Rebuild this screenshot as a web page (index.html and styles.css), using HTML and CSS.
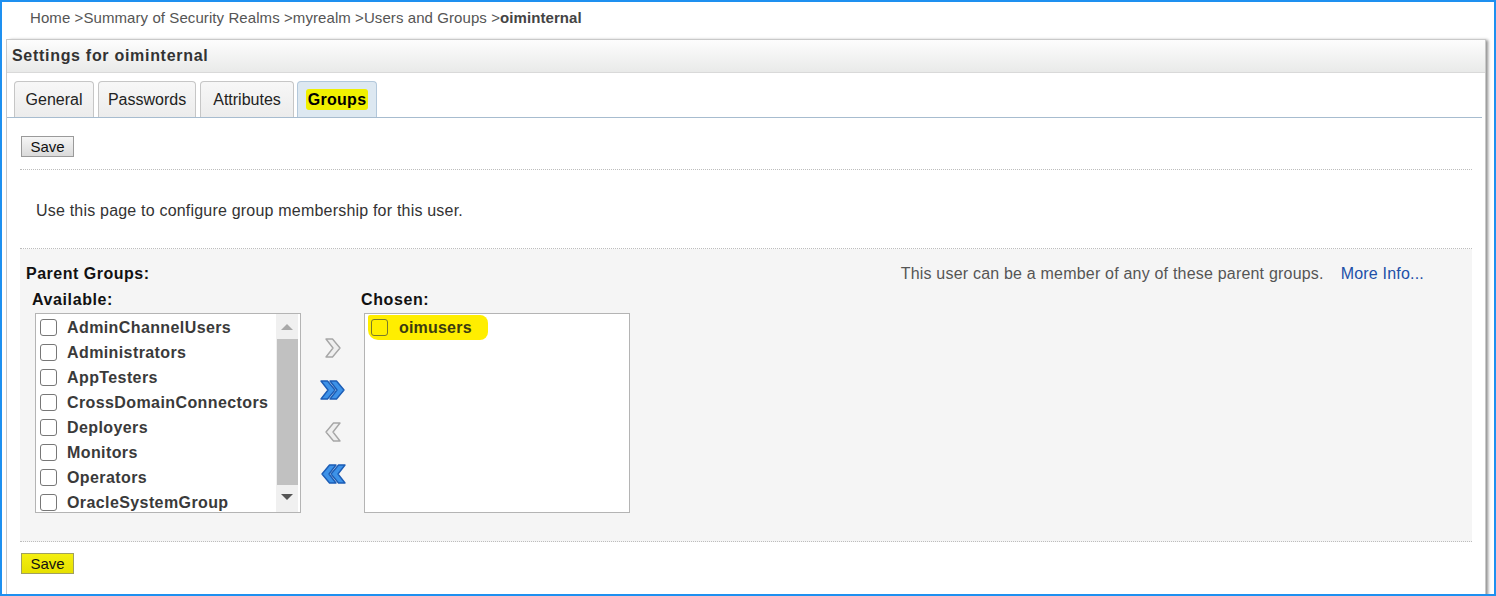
FILE: index.html
```html
<!DOCTYPE html>
<html>
<head>
<meta charset="utf-8">
<link rel="stylesheet" href="styles.css">
</head>
<body>
<div class="frame">
  <div class="crumbs">Home &gt;Summary of Security Realms &gt;myrealm &gt;Users and Groups &gt;<b>oiminternal</b></div>
  <div class="panel">
    <div class="panel-head">Settings for oiminternal</div>
    <div class="tabs">
      <div class="tab t-general">General</div>
      <div class="tab t-passwords">Passwords</div>
      <div class="tab t-attributes">Attributes</div>
      <div class="tab t-groups active"><span class="hl">Groups</span></div>
    </div>
    <div class="content">
      <button class="btn">Save</button>
      <div class="intro">Use this page to configure group membership for this user.</div>
      <div class="groups">
        <div class="grow">
          <div class="glabel">Parent Groups:</div>
          <div class="ginfo">This user can be a member of any of these parent groups.<a class="more">More Info...</a></div>
        </div>
        <div class="shuttle">
          <div class="col">
            <div class="clabel">Available:</div>
            <div class="box">
              <div class="items">
                <div class="item"><span class="cb"></span>AdminChannelUsers</div>
                <div class="item"><span class="cb"></span>Administrators</div>
                <div class="item"><span class="cb"></span>AppTesters</div>
                <div class="item"><span class="cb"></span>CrossDomainConnectors</div>
                <div class="item"><span class="cb"></span>Deployers</div>
                <div class="item"><span class="cb"></span>Monitors</div>
                <div class="item"><span class="cb"></span>Operators</div>
                <div class="item"><span class="cb"></span>OracleSystemGroup</div>
              </div>
              <div class="sbar">
                <div class="sarrow up"></div>
                <div class="thumb"></div>
                <div class="sarrow down"></div>
              </div>
            </div>
          </div>
          <div class="arrows">
            <svg width="26" height="22" viewBox="0 0 26 22"><polygon points="6,2 12.5,2 20,11 12.5,20 6,20 13,11" fill="#efefef" stroke="#a6a6a6" stroke-width="1.4" stroke-linejoin="round"/></svg>
            <svg width="26" height="22" viewBox="0 0 26 22"><polygon points="1,2 7.5,2 15,11 7.5,20 1,20 8,11" fill="#3d92e8" stroke="#1b5cb5" stroke-width="1.4" stroke-linejoin="round"/><polygon points="10,2 16.5,2 24,11 16.5,20 10,20 17,11" fill="#3d92e8" stroke="#1b5cb5" stroke-width="1.4" stroke-linejoin="round"/></svg>
            <svg width="26" height="22" viewBox="0 0 26 22"><polygon points="20,2 13.5,2 6,11 13.5,20 20,20 13,11" fill="#efefef" stroke="#a6a6a6" stroke-width="1.4" stroke-linejoin="round"/></svg>
            <svg width="26" height="22" viewBox="0 0 26 22"><polygon points="16,2 9.5,2 2,11 9.5,20 16,20 9,11" fill="#3d92e8" stroke="#1b5cb5" stroke-width="1.4" stroke-linejoin="round"/><polygon points="25,2 18.5,2 11,11 18.5,20 25,20 18,11" fill="#3d92e8" stroke="#1b5cb5" stroke-width="1.4" stroke-linejoin="round"/></svg>
          </div>
          <div class="col">
            <div class="clabel">Chosen:</div>
            <div class="box chosen">
              <div class="items">
                <div class="item picked"><span class="cb"></span>oimusers</div>
              </div>
            </div>
          </div>
        </div>
      </div>
      <button class="btn yellow">Save</button>
    </div>
  </div>
</div>
</body>
</html>
```

FILE: styles.css
```css
html, body {
  margin: 0;
  padding: 0;
  background: #ffffff;
}
body {
  font-family: "Liberation Sans", Arial, sans-serif;
  color: #333333;
}
.frame {
  width: 1496px;
  height: 596px;
  box-sizing: border-box;
  border: 2px solid #1e90f0;
  overflow: hidden;
  background: #ffffff;
}
.crumbs {
  padding: 6px 0 0 28px;
  height: 20px;
  line-height: 20px;
  font-size: 15px;
  letter-spacing: 0.08px;
  color: #555555;
}
.crumbs b {
  color: #444444;
}
.panel {
  margin: 11px 8px 0 4px;
  border: 1px solid #c9c9c9;
  border-bottom: none;
  box-shadow: 3px 0 3px -1px #8c8c8c;
  height: 600px;
  background: #ffffff;
}
.panel-head {
  height: 32px;
  line-height: 32px;
  padding-left: 5px;
  font-size: 16px;
  letter-spacing: 0.7px;
  font-weight: bold;
  color: #333333;
  background: linear-gradient(#fdfdfd, #e9eae9);
  border-bottom: 1px solid #d9d9d9;
}
.tabs {
  display: flex;
  gap: 4px;
  padding: 8px 0 0 7px;
  border-bottom: 1px solid #a7bccf;
  margin-right: 3px;
}
.tab {
  height: 35px;
  line-height: 35px;
  text-align: center;
  font-size: 16px;
  color: #222222;
  border: 1px solid #c6c6c6;
  border-bottom: none;
  border-radius: 4px 4px 0 0;
  background: linear-gradient(#f7f7f7, #ececec);
}
.t-general { width: 78px; }
.t-passwords { width: 96px; }
.t-attributes { width: 92px; }
.t-groups { width: 78px; margin-left: -1px; }
.tab.active {
  background: #dde8f1;
  border-color: #b3c8db;
  font-weight: bold;
  color: #000000;
}
.hl {
  background: #f0f000;
  padding: 2px 2px;
  border-radius: 3px;
  letter-spacing: 0.3px;
}
.content {
  padding: 18px 13px 0 13px;
}
.btn {
  display: block;
  margin: 0 0 0 1px;
  width: 53px;
  height: 21px;
  padding: 0;
  font-family: "Liberation Sans", Arial, sans-serif;
  font-size: 15px;
  color: #111111;
  border: 1px solid #9a9a9a;
  border-radius: 0;
  background: linear-gradient(#f6f6f6, #dadada);
}
.btn.yellow {
  margin-top: 11px;
  background: linear-gradient(#f4ef10, #e6e000);
  border-color: #a0a060;
}
.intro {
  margin-top: 12px;
  border-top: 1px dotted #bdbdbd;
  border-bottom: 1px dotted #bdbdbd;
  padding: 31px 0 27px 16px;
  line-height: 20px;
  font-size: 16px;
  letter-spacing: 0.2px;
  color: #333333;
}
.groups {
  background: #f5f5f5;
  border-bottom: 1px dotted #bdbdbd;
  padding: 15px 0 28px 0;
}
.grow {
  display: flex;
  justify-content: space-between;
  padding: 0 48px 0 6px;
  line-height: 20px;
}
.glabel {
  font-size: 16px;
  letter-spacing: 0.5px;
  font-weight: bold;
  color: #111111;
}
.ginfo {
  font-size: 16px;
  letter-spacing: 0.2px;
  color: #555555;
}
.more {
  color: #2150a8;
  margin-left: 17px;
}
.shuttle {
  display: flex;
  align-items: flex-start;
  padding: 6px 0 0 15px;
}
.clabel {
  margin-left: -3px;
  height: 20px;
  line-height: 20px;
  margin-bottom: 3px;
  font-size: 16px;
  letter-spacing: 0.6px;
  font-weight: bold;
  color: #111111;
}
.box {
  width: 264px;
  height: 198px;
  border: 1px solid #b4b4b4;
  background: #ffffff;
  display: flex;
  overflow: hidden;
}
.items {
  flex: 1;
  padding: 1px 0 0 4px;
}
.item {
  display: flex;
  align-items: center;
  height: 25px;
  font-size: 16px;
  letter-spacing: 0.4px;
  font-weight: bold;
  color: #3a3a3a;
  white-space: nowrap;
}
.cb {
  width: 15px;
  height: 15px;
  border: 1.5px solid #777777;
  border-radius: 3px;
  background: #ffffff;
  margin-right: 10px;
  flex: none;
}
.sbar {
  width: 22px;
  margin-right: 2px;
  background: #f0f0f0;
  display: flex;
  flex-direction: column;
  align-items: center;
}
.sarrow {
  width: 0;
  height: 0;
  border-left: 6px solid transparent;
  border-right: 6px solid transparent;
}
.sarrow.up {
  margin-top: 10px;
  border-bottom: 6px solid #a8a8a8;
}
.sarrow.down {
  margin-top: 9px;
  border-top: 6px solid #555555;
}
.thumb {
  margin-top: 9px;
  width: 21px;
  height: 146px;
  background: #c1c1c1;
}
.arrows {
  width: 63px;
  padding-top: 47px;
  display: flex;
  flex-direction: column;
  align-items: center;
  gap: 20px;
}
.arrows svg {
  display: block;
}
.chosen .items {
  padding-left: 3px;
}
.item.picked {
  background: #ffee00;
  color: #3b3b10;
  width: 117px;
  padding-left: 3px;
  letter-spacing: 0.2px;
  border-radius: 2px 8px 8px 10px;
}
.item.picked .cb {
  background: transparent;
  border-color: #7a7a2a;
  margin-right: 11px;
}
```
